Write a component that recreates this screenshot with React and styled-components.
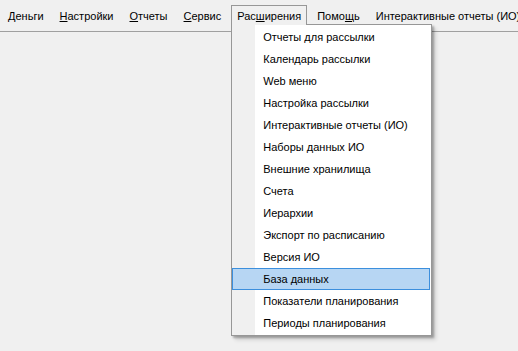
import React from "react";
import styled, { createGlobalStyle } from "styled-components";

const Global = createGlobalStyle`
  html, body {
    margin: 0;
    padding: 0;
    background: #f0f0f0;
    width: 518px;
    height: 351px;
    overflow: hidden;
  }
  body {
    font-family: "Liberation Sans", Arial, sans-serif;
    font-size: 11px;
    color: #000;
  }
`;

const Window = styled.div`
  width: 518px;
  height: 351px;
  background: #f0f0f0;
  overflow: hidden;
`;

const MenuBar = styled.div`
  box-sizing: border-box;
  display: flex;
  align-items: flex-start;
  height: 32px;
  padding: 5px 0 0 0;
  border-bottom: 1px solid #a0a0a0;
  white-space: nowrap;
`;

const MenuItem = styled.div`
  position: relative;
  box-sizing: border-box;
  height: 19px;
  padding: 0 7px;
  line-height: 20px;
  border: 1px solid transparent;
  border-bottom: none;
  background: #f0f0f0;
  ${(p) =>
    p.$open &&
    `
    margin: 0 2px;
    padding: 0 5px;
    border-color: #979797;
    z-index: 2;
    &::after {
      content: "";
      position: absolute;
      left: 0;
      right: 0;
      bottom: -1px;
      height: 1px;
      background: #f0f0f0;
      z-index: 3;
    }
  `}
`;

const Key = styled.span`
  text-decoration: underline;
  text-underline-offset: 1px;
`;

const Dropdown = styled.div`
  position: absolute;
  left: -1px;
  top: 100%;
  box-sizing: border-box;
  width: 201px;
  padding: 1px 1px 1px 0;
  border: 1px solid #979797;
  background: linear-gradient(to right, #f0f0f0 0, #f0f0f0 23px, #ffffff 23px);
  box-shadow: 2px 2px 2px rgba(0, 0, 0, 0.28), 4px 4px 4px rgba(0, 0, 0, 0.12);
  z-index: 1;
  line-height: normal;
`;

const DropItem = styled.div`
  box-sizing: border-box;
  height: 22px;
  line-height: 20px;
  padding-left: 30px;
  border: 1px solid ${(p) => (p.$active ? "#3c8fdd" : "transparent")};
  background: ${(p) => (p.$active ? "#b7d6f3" : "transparent")};
`;

const items = [
  "Отчеты для рассылки",
  "Календарь рассылки",
  "Web меню",
  "Настройка рассылки",
  "Интерактивные отчеты (ИО)",
  "Наборы данных ИО",
  "Внешние хранилища",
  "Счета",
  "Иерархии",
  "Экспорт по расписанию",
  "Версия ИО",
  "База данных",
  "Показатели планирования",
  "Периоды планирования",
];

export default function App() {
  return (
    <Window>
      <Global />
      <MenuBar>
        <MenuItem>
          <Key>Д</Key>еньги
        </MenuItem>
        <MenuItem>
          <Key>Н</Key>астройки
        </MenuItem>
        <MenuItem>
          <Key>О</Key>тчеты
        </MenuItem>
        <MenuItem>
          <Key>С</Key>ервис
        </MenuItem>
        <MenuItem $open>
          Рас<Key>ш</Key>ирения
          <Dropdown>
            {items.map((t) => (
              <DropItem key={t} $active={t === "База данных"}>
                {t}
              </DropItem>
            ))}
          </Dropdown>
        </MenuItem>
        <MenuItem>
          Помо<Key>щ</Key>ь
        </MenuItem>
        <MenuItem>Интерактивные отчеты (ИО)</MenuItem>
      </MenuBar>
    </Window>
  );
}
